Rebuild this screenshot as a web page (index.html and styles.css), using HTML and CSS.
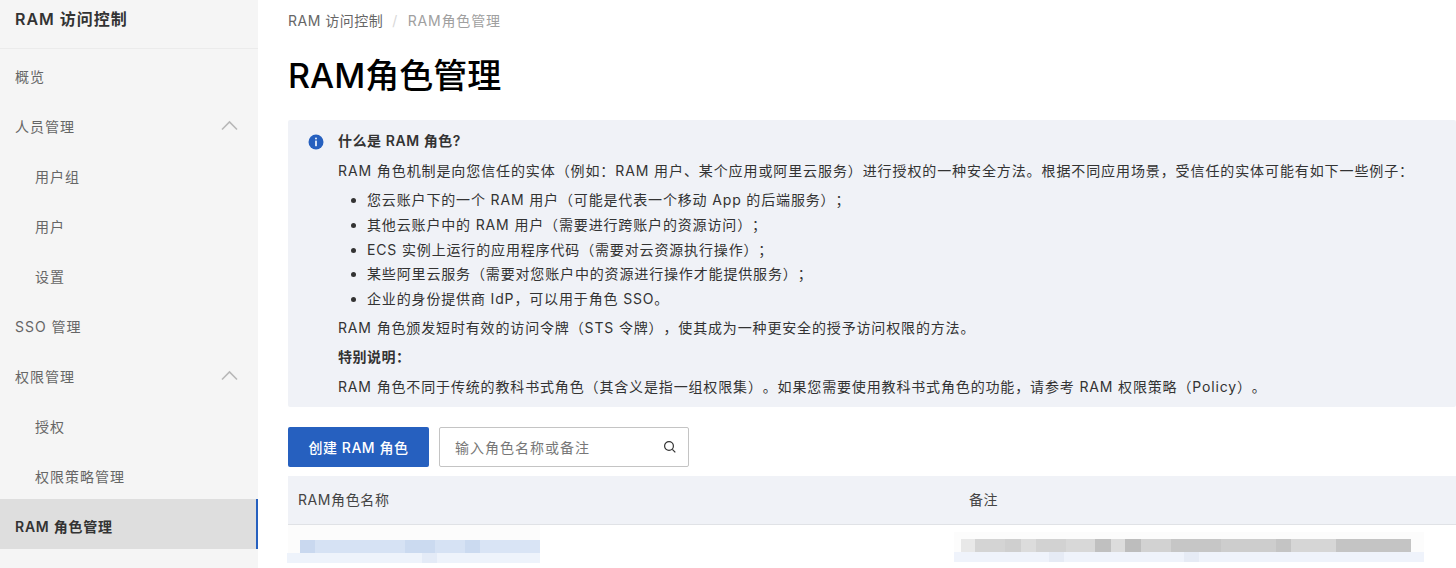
FILE: index.html
```html
<!DOCTYPE html>
<html lang="zh-CN">
<head>
<meta charset="utf-8">
<title>RAM角色管理</title>
<link rel="stylesheet" href="styles.css">
</head>
<body>
<div class="app">
  <aside class="sidebar">
    <div class="side-title">RAM 访问控制</div>
    <nav class="nav">
      <div class="nav-item">概览</div>
      <div class="nav-item">人员管理<svg class="chev" width="17" height="11" viewBox="0 0 17 11"><path d="M1 9.500L8.500 2l7.500 7.500" fill="none" stroke="#b8b8b8" stroke-width="1.600"/></svg></div>
      <div class="nav-item sub">用户组</div>
      <div class="nav-item sub">用户</div>
      <div class="nav-item sub">设置</div>
      <div class="nav-item">SSO 管理</div>
      <div class="nav-item">权限管理<svg class="chev" width="17" height="11" viewBox="0 0 17 11"><path d="M1 9.500L8.500 2l7.500 7.500" fill="none" stroke="#b8b8b8" stroke-width="1.600"/></svg></div>
      <div class="nav-item sub">授权</div>
      <div class="nav-item sub">权限策略管理</div>
      <div class="nav-item active">RAM 角色管理</div>
    </nav>
  </aside>
  <main class="main">
    <div class="crumbs"><span>RAM 访问控制</span><span class="sep">/</span><span class="cur">RAM角色管理</span></div>
    <h1 class="title">RAM角色管理</h1>
    <section class="notice">
      <svg class="info" width="16" height="16" viewBox="0 0 16 16"><circle cx="8" cy="8" r="7.500" fill="#2660bf"/><rect x="7.100" y="3.600" width="1.800" height="1.800" rx=".9" fill="#fff"/><rect x="7.200" y="6.600" width="1.600" height="5.600" fill="#fff"/></svg>
      <div class="notice-body">
        <div class="n-head">什么是 RAM 角色?</div>
        <p class="n-p n-lead">RAM 角色机制是向您信任的实体（例如：RAM 用户、某个应用或阿里云服务）进行授权的一种安全方法。根据不同应用场景，受信任的实体可能有如下一些例子：</p>
        <ul class="n-list">
          <li>您云账户下的一个 RAM 用户（可能是代表一个移动 App 的后端服务）；</li>
          <li>其他云账户中的 RAM 用户（需要进行跨账户的资源访问）；</li>
          <li>ECS 实例上运行的应用程序代码（需要对云资源执行操作）；</li>
          <li>某些阿里云服务（需要对您账户中的资源进行操作才能提供服务）；</li>
          <li>企业的身份提供商 IdP，可以用于角色 SSO。</li>
        </ul>
        <p class="n-p">RAM 角色颁发短时有效的访问令牌（STS 令牌），使其成为一种更安全的授予访问权限的方法。</p>
        <div class="n-strong">特别说明：</div>
        <p class="n-p">RAM 角色不同于传统的教科书式角色（其含义是指一组权限集）。如果您需要使用教科书式角色的功能，请参考 RAM 权限策略（Policy）。</p>
      </div>
    </section>
    <div class="toolbar">
      <button class="btn">创建 RAM 角色</button>
      <div class="search"><span class="ph">输入角色名称或备注</span><svg width="14" height="14" viewBox="0 0 14 14"><circle cx="6" cy="6" r="4.400" fill="none" stroke="#333" stroke-width="1.200"/><path d="M9.300 9.300l3 3" stroke="#333" stroke-width="1.200"/></svg></div>
    </div>
    <div class="table">
      <div class="thead"><div class="c1">RAM角色名称</div><div class="c2">备注</div></div>
      <div class="tbody">
        <div class="cell-a"><div class="bar bar-a"></div><div class="band band-a"></div></div>
        <div class="cell-b"><div class="bar bar-b"></div><div class="band band-b"></div></div>
      </div>
    </div>
  </main>
</div>
</body>
</html>
```
FILE: styles.css
```css
* { box-sizing: border-box; }
html, body { margin: 0; height: 100%; overflow: hidden; background: #fff; }
body { font-family: Inter, "Noto Sans CJK SC", sans-serif; font-size: 14px; color: #333; text-spacing-trim: space-all; }
.app { display: flex; height: 568px; }
.sidebar { width: 258px; flex: none; background: #f5f5f5; }
.side-title { height: 49px; padding: 7px 15px 0; font-size: 16px; font-weight: 600; line-height: 24px; letter-spacing: 1px; color: #333; border-bottom: 1px solid #ebebeb; }
.nav-item { height: 50px; padding: 3px 20px 0 15px; display: flex; align-items: center; justify-content: space-between; color: #666; font-size: 14px; letter-spacing: 1px; }
.nav-item.sub { padding-left: 35px; }
.chev { margin-top: -1px; }
.nav-item.active { background: #dedede; color: #333; font-weight: 600; letter-spacing: .75px; border-right: 2px solid #2660bf; }
.main { flex: 1; min-width: 0; padding-left: 30px; }
.crumbs { height: 42px; padding-top: 11px; line-height: 20px; color: #666; display: flex; letter-spacing: .5px; }
.crumbs .sep { margin: 0 10px 0 9px; color: #d8d8d8; }
.crumbs .cur { color: #a0a0a0; letter-spacing: .8px; }
.title { margin: 0; height: 78px; padding-top: 11px; font-size: 34px; line-height: 46px; font-weight: 500; color: #000; }
.notice { height: 287px; background: #f0f2f7; display: flex; padding: 14px 0 0 20px; border-radius: 2px; }
.info { flex: none; }
.notice-body { margin-left: 14px; margin-top: -1px; white-space: nowrap; line-height: 24px; color: #333; font-size: 14px; letter-spacing: .85px; }
.n-head, .n-strong { font-weight: 600; }
.n-head { height: 24px; line-height: 16px; letter-spacing: .55px; margin-bottom: 2px; }
.n-p { margin: 0; height: 29px; line-height: 24px; }
.n-lead { letter-spacing: .9px; }
.n-list { margin: 0 0 4px; padding: 0 0 0 29px; }
.n-list li { height: 24.8px; line-height: 24px; }
.n-strong { height: 30px; letter-spacing: .5px; }
.toolbar { display: flex; gap: 10px; margin-top: 20px; height: 40px; }
.btn { width: 141px; height: 40px; border: 0; border-radius: 2px; background: #2660bf; color: #fff; font: 500 14px Inter, "Noto Sans CJK SC", sans-serif; letter-spacing: .55px; }
.search { width: 250px; height: 40px; border: 1px solid #c4c4c4; border-radius: 2px; padding: 0 11px 0 15px; display: flex; align-items: center; justify-content: space-between; }
.ph { color: #777; letter-spacing: 1px; }
.table { margin-top: 9px; }
.thead { display: flex; height: 49px; background: #f0f2f7; border-bottom: 1px solid #e0e2e6; align-items: center; line-height: 20px; color: #444; letter-spacing: .6px; }
.c1 { width: 671px; padding-left: 10px; flex: none; }
.c2 { flex: 1; padding-left: 10px; }
.tbody { display: flex; }
.cell-a { width: 666px; flex: none; padding: 15px 0 0 12px; background: linear-gradient(#fcfcfc, #fcfcfc) no-repeat -4px 0 / 256px 100%; }
.cell-b { flex: 1; padding: 14px 0 0 6px; background: linear-gradient(#fcfcfc, #fcfcfc) no-repeat 0 7px / 470px 30px; }
.bar { height: 13px; }
.band { height: 10px; }
.bar-a { width: 240px; background: linear-gradient(90deg, #c9d8ef 0 15px, #d6e2f4 15px 105px, #cbdaf0 105px 135px, #d6e2f4 135px 165px, #cbdaf0 165px 180px, #d9e4f5 180px 240px); }
.band-a { width: 253px; margin-left: -13px; background: linear-gradient(90deg, #eef3fb 0 135px, #e4ebf7 135px 150px, #eef3fb 150px 253px); }
.bar-b { width: 450px; margin-left: 1px; background: linear-gradient(90deg, #e8e8e8 0 14px, #d4d4d4 14px 44px, #cfcfcf 44px 60px, #dcdcdc 60px 75px, #d2d2d2 75px 105px, #d8d8d8 105px 134px, #c0c0c0 134px 150px, #dcdcdc 150px 164px, #bdbdbd 164px 180px, #d2d2d2 180px 210px, #c6c6c6 210px 260px, #cdcdcd 260px 315px, #c4c4c4 315px 330px, #d6d6d6 330px 375px, #c4c4c4 375px 450px); }
.band-b { width: 470px; margin-left: -6px; background: linear-gradient(90deg, #eff3fb 0 95px, #e6ebf5 95px 110px, #eff3fb 110px 230px, #e6ebf5 230px 245px, #eff3fb 245px 470px); }
```
